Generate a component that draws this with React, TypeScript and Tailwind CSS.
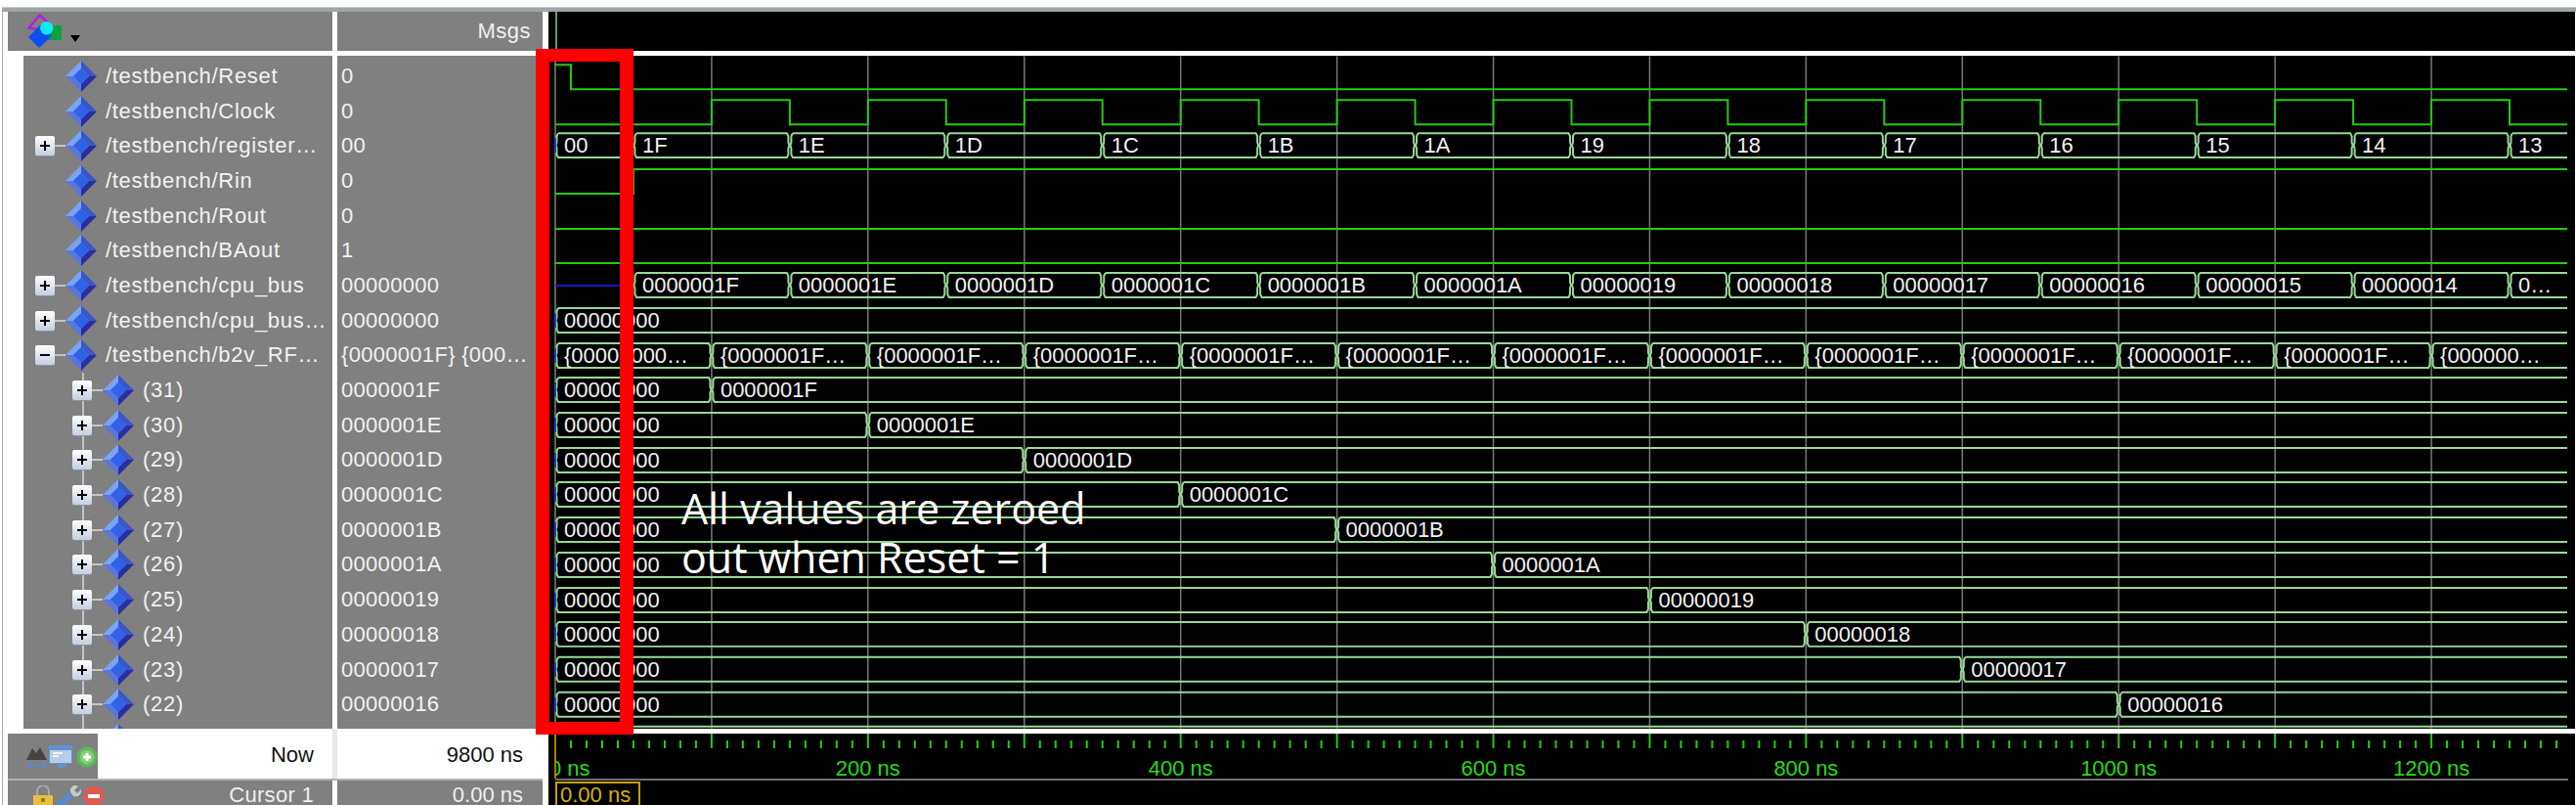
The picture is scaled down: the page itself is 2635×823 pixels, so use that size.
import React from 'react';

const T0 = 568;
const END = 2627;
const PITCH = 35.7;
const tx = (ns: number) => T0 + ns * 1.6;
const rowY = (i: number) => 78 + i * PITCH;
const hex = (n: number, len: number) => n.toString(16).toUpperCase().padStart(len, '0');

type Row = { name: string; value: string; level: 0 | 1; box?: '+' | '-' };

const rows: Row[] = [
  { name: '/testbench/Reset', value: '0', level: 0 },
  { name: '/testbench/Clock', value: '0', level: 0 },
  { name: '/testbench/register…', value: '00', level: 0, box: '+' },
  { name: '/testbench/Rin', value: '0', level: 0 },
  { name: '/testbench/Rout', value: '0', level: 0 },
  { name: '/testbench/BAout', value: '1', level: 0 },
  { name: '/testbench/cpu_bus', value: '00000000', level: 0, box: '+' },
  { name: '/testbench/cpu_bus…', value: '00000000', level: 0, box: '+' },
  { name: '/testbench/b2v_RF…', value: '{0000001F} {000…', level: 0, box: '-' },
  ...Array.from({ length: 10 }, (_, k): Row => ({
    name: `(${31 - k})`,
    value: hex(0x1f - k, 8),
    level: 1,
    box: '+',
  })),
  // only the tip of this row shows above the divider
  { name: '', value: '', level: 1, box: '+' },
];

type Seg = { ns: number; label: string };

// bus rows: row index -> list of segments
const counted = (len: number): Seg[] => [
  { ns: 0, label: hex(0, len) },
  ...Array.from({ length: 13 }, (_, k) => ({ ns: 50 + 100 * k, label: hex(0x1f - k, len) })),
];

const cpuBus: Seg[] = counted(8).slice(1).map((s, k) => (k === 12 ? { ...s, label: '0…' } : s));

const rfBus: Seg[] = [
  { ns: 0, label: '{00000000…' },
  ...Array.from({ length: 11 }, (_, k) => ({ ns: 100 + 100 * k, label: '{0000001F…' })),
  { ns: 1200, label: '{000000…' },
];

const buses: { row: number; segs: Seg[] }[] = [
  { row: 2, segs: counted(2) },
  { row: 6, segs: cpuBus },
  { row: 7, segs: [{ ns: 0, label: '00000000' }] },
  { row: 8, segs: rfBus },
  ...Array.from({ length: 10 }, (_, k) => ({
    row: 9 + k,
    segs: [
      { ns: 0, label: '00000000' },
      { ns: 100 + 100 * k, label: hex(0x1f - k, 8) },
    ],
  })),
];

function busPath(x0: number, x1: number, top: number, bot: number, open: boolean) {
  const cy = (top + bot) / 2;
  let d = `M${x0 + 3} ${top}L${x0 + 1.5} ${top + 3}V${cy - 3}L${x0 + 0.5} ${cy}L${x0 + 1.5} ${cy + 3}V${bot - 3}L${x0 + 3} ${bot}`;
  if (open) {
    d += `H${x1}M${x0 + 3} ${top}H${x1}`;
  } else {
    d += `H${x1 - 3}L${x1 - 1.5} ${bot - 3}V${cy + 3}L${x1 - 0.5} ${cy}L${x1 - 1.5} ${cy - 3}V${top + 3}L${x1 - 3} ${top}H${x0 + 3}`;
  }
  return d;
}

function Bus({ row, segs }: { row: number; segs: Seg[] }) {
  const cy = rowY(row);
  const top = Math.round(cy - 13);
  const bot = top + 25;
  return (
    <g>
      {segs.map((s, i) => {
        const x0 = tx(s.ns);
        const next = segs[i + 1];
        const x1 = next ? tx(next.ns) : END;
        return (
          <g key={i}>
            <path d={busPath(x0, x1, top, bot, !next)} fill="none" stroke="#98d898" strokeWidth={2} />
            <text x={x0 + 9} y={top + 20} fontSize={22} fill="#f2f2f2">
              {s.label}
            </text>
          </g>
        );
      })}
      {segs[0].ns === 0 && <path d={`M${T0} ${top + 5}V${bot - 5}`} stroke="#2038c8" strokeWidth={2} />}
    </g>
  );
}

function clockPath() {
  let d = `M${T0} 127`;
  for (let ns = 100; ns < 1300; ns += 100) {
    d += `H${tx(ns)}V102H${tx(ns + 50)}V127`;
  }
  return d + `H${END}`;
}

function Waves() {
  const grid = Array.from({ length: 12 }, (_, k) => tx(100 + 100 * k));
  return (
    <svg className="block w-full h-full" viewBox="561 57 2074 688">
      {grid.map(x => (
        <line key={x} x1={x} x2={x} y1={57} y2={745} stroke="#787878" strokeWidth={1.5} />
      ))}
      <line x1={T0} x2={T0} y1={57} y2={745} stroke="#6f8f6f" strokeWidth={1.5} />
      <g fill="none" stroke="#22cc11" strokeWidth={2}>
        <path d={`M${T0} 66H${tx(10)}V91H${END}`} />
        <path d={clockPath()} />
        <path d={`M${T0} 198H${tx(50)}V173H${END}`} />
        <path d={`M${T0} 234H${END}`} />
        <path d={`M${T0} 269H${END}`} />
      </g>
      <path d={`M${T0} 292H${tx(50)}`} stroke="#1414d8" strokeWidth={2} />
      {buses.map(b => (
        <Bus key={b.row} row={b.row} segs={b.segs} />
      ))}
      {/* top edge of the row hidden below the divider */}
      <path d={`M${T0 + 3} 743H${END}`} stroke="#98d898" strokeWidth={2} />
    </svg>
  );
}

function Ruler() {
  const ticks = Array.from({ length: 129 }, (_, k) => k * 10);
  return (
    <svg className="block w-full h-full overflow-visible" viewBox="561 750 2074 46">
      {ticks.map(ns =>
        ns === 0 ? null : (
          <line
            key={ns}
            x1={tx(ns)}
            x2={tx(ns)}
            y1={ns % 100 === 0 ? 750 : 757}
            y2={765}
            stroke="#22cc11"
            strokeWidth={2}
          />
        ),
      )}
      <g fontSize={22} fill="#22dd11">
        <text x={562} y={793}>0 ns</text>
        {[200, 400, 600, 800, 1000, 1200].map(ns => (
          <text key={ns} x={tx(ns)} y={793} textAnchor="middle">
            {ns} ns
          </text>
        ))}
      </g>
      {/* the zero sits half under the pane edge */}
      <rect x={561} y={750} width={7} height={46} fill="#000" />
      <line x1={T0} x2={T0} y1={750} y2={796} stroke="#d4a800" strokeWidth={1.5} />
    </svg>
  );
}

function Diamond() {
  return (
    <svg width="32" height="32" viewBox="0 0 32 32" className="shrink-0">
      <path d="M16 0L32 16H24L16 8Z" fill="#3a56c8" />
      <path d="M16 0L0 16H8L16 8Z" fill="#79a3f4" />
      <path d="M0 16L16 32V24L8 16Z" fill="#5a76dc" />
      <path d="M32 16L16 32V24L24 16Z" fill="#2a2ea0" />
      <path d="M16 8L24 16L16 24L8 16Z" fill="#2f62ea" />
    </svg>
  );
}

function TreeBox({ sign }: { sign: '+' | '-' }) {
  return (
    <div className="relative z-10 w-[20px] h-[20px] shrink-0 rounded-[2px] bg-gradient-to-b from-white to-[#c4cfe0] flex items-center justify-center shadow-[0_1px_0_#8894a8]">
      <div className="relative w-[10px] h-[2px] bg-black">
        {sign === '+' && <div className="absolute left-[4px] top-[-4px] w-[2px] h-[10px] bg-black" />}
      </div>
    </div>
  );
}

function SignalRow({ row }: { row: Row }) {
  return (
    <div className="relative flex items-center h-[35.7px] shrink-0">
      {row.level === 1 && <div className="absolute left-[60px] top-0 w-[2px] h-full bg-[#c4c4c4]" />}
      <div className={`shrink-0 ${row.level === 0 ? 'w-[12px]' : 'w-[50px]'}`} />
      {row.box ? (
        <>
          <TreeBox sign={row.box} />
          <div className="w-[11px] h-[2px] bg-[#c4c4c4] shrink-0" />
        </>
      ) : (
        <div className="w-[31px] shrink-0" />
      )}
      <Diamond />
      {row.name && <span className="ml-[9px] whitespace-nowrap tracking-[0.7px]">{row.name}</span>}
    </div>
  );
}

function LogoIcon() {
  return (
    <svg width="36" height="36" viewBox="0 0 36 36">
      <path d="M1.5 14.5L12.7 1.5L21 9L11 16Z" fill="none" stroke="#b020d8" strokeWidth={2.5} />
      <rect x="20" y="12" width="15" height="15" fill="#10a040" />
      <path d="M12.7 12L25.5 22.5L12 35L1 24Z" fill="#0a50f0" />
      <circle cx="19.7" cy="14.7" r="6.7" fill="#10e8f8" />
    </svg>
  );
}

function NowIcons() {
  return (
    <div className="flex items-center gap-[2px] pl-[19px] pt-[12px]">
      <svg width="21" height="22" viewBox="0 0 21 22">
        <path d="M0 14L6 2L10 7L14 1L21 14Z" fill="#444" />
        <path d="M1 19H20M1 19L4 16M1 19L4 22M20 19L17 16M20 19L17 22" stroke="#4a90e8" strokeWidth={1.5} fill="none" />
      </svg>
      <svg width="24" height="24" viewBox="0 0 24 24">
        <rect x="0" y="0" width="24" height="19" fill="#5f94d8" />
        <rect x="1" y="5" width="22" height="13" fill="#b8cce4" />
        <path d="M4 8H14M4 11H10" stroke="#fff" strokeWidth={1.5} />
        <path d="M9 18H18V21L13 24L9 21Z" fill="#5f94d8" />
      </svg>
      <svg width="22" height="22" viewBox="0 0 22 22" className="ml-[2px]">
        <circle cx="11" cy="11" r="10.5" fill="#5cb85c" />
        <circle cx="11" cy="11" r="7" fill="#86cf7c" />
        <path d="M11 7V15M7 11H15" stroke="#fff" strokeWidth={3} />
      </svg>
    </div>
  );
}

function CursorIcons() {
  return (
    <div className="flex items-start gap-[2px] pl-[25px] pt-[5px] h-full">
      <svg width="22" height="22" viewBox="0 0 22 22">
        <path d="M5 10V6A6 6 0 0 1 17 6V10" fill="none" stroke="#a8a8a8" strokeWidth={2} />
        <rect x="1" y="10" width="20" height="12" fill="#e8c040" />
        <rect x="9" y="13" width="4" height="4" fill="#a07810" />
      </svg>
      <svg width="25" height="22" viewBox="0 0 25 22" className="ml-[1px]">
        <path d="M2 21L15 8" stroke="#5a88d8" strokeWidth={6} />
        <path d="M15 8A5 5 0 0 1 22 1L18 5L21 8L25 4A6 6 0 0 1 17 11Z" fill="#c8c8c8" />
      </svg>
      <svg width="22" height="22" viewBox="0 0 22 22">
        <circle cx="11" cy="11" r="10.5" fill="#e05a50" />
        <rect x="5" y="9" width="12" height="4" fill="#fff" />
      </svg>
    </div>
  );
}

export default function App() {
  return (
    <div className="relative w-[2635px] h-[823px] overflow-hidden bg-white text-[22px] leading-none font-['Liberation_Sans',Arial,sans-serif]">
      <div className="h-[7px]" />
      <div className="h-px bg-[#b4cde4] ml-[2px]" />
      <div className="h-[4px] bg-[#a4a4a4] ml-[2px]" />

      <div className="ml-[2px] mr-px border-l border-[#a8a8a8] pl-[5px] flex flex-col h-[811px]">
        {/* header */}
        <div className="flex h-[40px] shrink-0 text-[#f0f0f0]">
          <div className="w-[332px] bg-[#808080] flex items-center pl-[20px] gap-[8px]">
            <LogoIcon />
            <div className="mt-[14px] w-0 h-0 border-x-[5px] border-x-transparent border-t-[7px] border-t-black" />
          </div>
          <div className="w-[5px]" />
          <div className="w-[210px] bg-[#808080] flex items-center justify-end pr-[12px] tracking-[0.5px]">Msgs</div>
          <div className="w-[6px]" />
          <div className="flex-1 bg-black pl-[7px]">
            <div className="w-[2px] h-full bg-[#6f8f6f]" />
          </div>
        </div>
        <div className="h-[5px] shrink-0" />

        {/* signal list and waves */}
        <div className="flex h-[688px] shrink-0 overflow-hidden">
          <div className="w-[16px] shrink-0" />
          <div className="w-[316px] shrink-0 bg-[#808080] text-[#f2f2f2] pt-[3px] overflow-hidden flex flex-col">
            {rows.map((r, i) => (
              <SignalRow key={i} row={r} />
            ))}
          </div>
          <div className="w-[5px] shrink-0" />
          <div className="w-[210px] shrink-0 bg-[#808080] text-[#f2f2f2] pt-[3px] overflow-hidden flex flex-col">
            {rows.map((r, i) => (
              <div key={i} className="h-[35.7px] shrink-0 flex items-center pl-[4px] whitespace-nowrap tracking-[0.3px]">
                {r.value}
              </div>
            ))}
          </div>
          <div className="w-[6px] shrink-0" />
          <div className="flex-1 bg-black">
            <Waves />
          </div>
        </div>

        <div className="h-[5px] shrink-0" />

        {/* now row */}
        <div className="flex h-[46px] shrink-0 text-[#111]">
          <div className="w-[92px] bg-[#808080]">
            <NowIcons />
          </div>
          <div className="w-[240px] flex items-center justify-end pr-[19px] -mt-[2px]">Now</div>
          <div className="w-[5px] bg-[#e8e8e8] -mt-[5px]" />
          <div className="w-[210px] flex items-center justify-end pr-[20px] -mt-[2px]">9800 ns</div>
          <div className="w-[6px]" />
          <div className="flex-1 bg-black">
            <Ruler />
          </div>
        </div>
        <div className="h-[2px] shrink-0 flex">
          <div className="w-[547px] bg-[#b0b0b0]" />
          <div className="w-[6px]" />
          <div className="flex-1 bg-black pl-[7px] pr-[7px]">
            <div className="h-full bg-[#707070]" />
          </div>
        </div>

        {/* cursor row */}
        <div className="flex flex-1 min-h-0 text-[#efefef] leading-[20px]">
          <div className="w-[332px] bg-[#808080] flex justify-between">
            <CursorIcons />
            <div className="pr-[19px] pt-[5px] tracking-[0.3px]">Cursor 1</div>
          </div>
          <div className="w-[5px]" />
          <div className="w-[210px] bg-[#808080] flex justify-end pr-[20px] pt-[5px]">0.00 ns</div>
          <div className="w-[6px]" />
          <div className="flex-1 bg-black pl-[7px] pt-[1px]">
            <div className="w-[87px] h-[40px] border-2 border-[#c8a000] text-[#d8b000] pl-[3px] pt-[2px]">0.00 ns</div>
          </div>
        </div>
      </div>

      {/* annotation over the waves */}
      <div className="absolute left-[697px] top-[495px] text-white text-[43px] leading-[50px] font-['Open_Sans',sans-serif] whitespace-nowrap">
        <div>All values are zeroed</div>
        <div>out when Reset = 1</div>
      </div>
      <div className="absolute left-[548px] top-[50px] w-[100px] h-[701px] border-x-[14px] border-y-[13px] border-[#ff0000]" />
    </div>
  );
}
